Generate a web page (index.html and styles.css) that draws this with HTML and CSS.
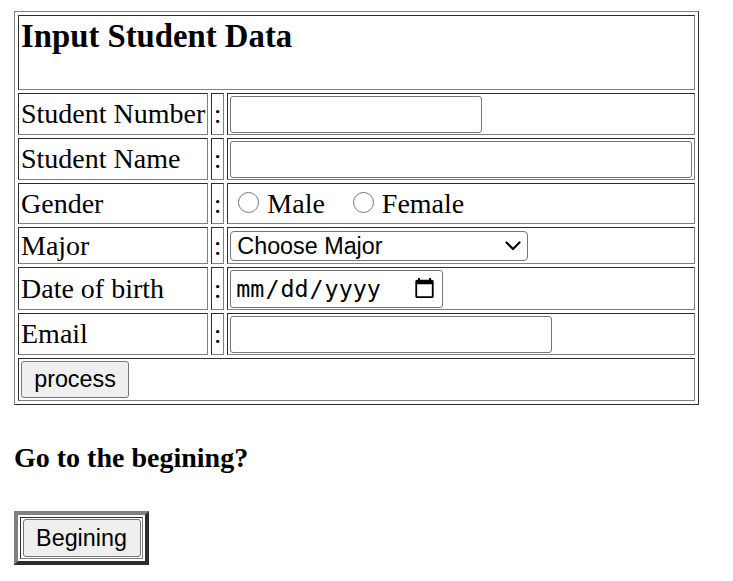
FILE: index.html
```html
<!DOCTYPE html>
<html>
<head>
<meta charset="utf-8">
<title>Input Student Data</title>
<link rel="stylesheet" href="styles.css">
</head>
<body>
<form class="student-form">
<table class="form-table">
  <tr class="row-title">
    <td colspan="3" class="title-cell"><span class="title">Input Student Data</span></td>
  </tr>
  <tr class="row-42">
    <td class="label">Student Number</td>
    <td class="colon">:</td>
    <td class="field"><input type="text" class="text-input input-number"></td>
  </tr>
  <tr class="row-42">
    <td class="label">Student Name</td>
    <td class="colon">:</td>
    <td class="field"><input type="text" class="text-input input-name"></td>
  </tr>
  <tr class="row-41">
    <td class="label">Gender</td>
    <td class="colon">:</td>
    <td class="field"><label class="option"><input type="radio" name="gender" class="radio"> Male</label> <label class="option option-second"><input type="radio" name="gender" class="radio"> Female</label></td>
  </tr>
  <tr class="row-37">
    <td class="label">Major</td>
    <td class="colon">:</td>
    <td class="field">
      <span class="select-wrap">
        <select class="select-input">
          <option>Choose Major</option>
          <option>Informatics</option>
          <option>Information Systems</option>
        </select>
        <svg class="select-arrow" width="16" height="10" viewBox="0 0 16 10" aria-hidden="true"><path d="M1.5 1.5 L8 8 L14.5 1.5" fill="none" stroke="#000" stroke-width="2.2" stroke-linecap="round" stroke-linejoin="round"/></svg>
      </span>
    </td>
  </tr>
  <tr class="row-43">
    <td class="label">Date of birth</td>
    <td class="colon">:</td>
    <td class="field"><input type="date" class="date-input"></td>
  </tr>
  <tr class="row-42">
    <td class="label">Email</td>
    <td class="colon">:</td>
    <td class="field"><input type="email" class="text-input input-email"></td>
  </tr>
  <tr class="row-43">
    <td colspan="3" class="button-cell"><button type="button" class="btn btn-process">process</button></td>
  </tr>
</table>
</form>
<h4 class="question">Go to the begining?</h4>
<table class="nav-table">
  <tr>
    <td class="nav-cell"><button type="button" class="btn btn-begin">Begining</button></td>
  </tr>
</table>
</body>
</html>
```
FILE: styles.css
```css
* {
  box-sizing: border-box;
}

body {
  margin: 11px 14px;
  background: #ffffff;
  color: #000000;
  font-family: "Liberation Serif", "Times New Roman", serif;
  font-size: 28px;
}

.student-form {
  margin: 0;
}

.form-table {
  width: 685px;
  border: 1px outset gray;
  border-spacing: 3px;
}

.form-table td {
  border: 1px inset gray;
  padding: 1px 2px;
  vertical-align: middle;
}

.row-title { height: 75px; }
.row-42 { height: 42px; }
.row-41 { height: 41px; }
.row-37 { height: 37px; }
.row-43 { height: 43px; }

.form-table .title-cell {
  vertical-align: top;
  padding-top: 2px;
}

.title {
  font-size: 32.76px;
  font-weight: bold;
}

.form-table .label {
  width: 190px;
  white-space: nowrap;
}

.form-table .colon {
  width: 13px;
  padding: 1px 1.5px;
}

.text-input,
.select-input,
.date-input {
  display: block;
  border: 1px solid #767676;
  border-radius: 3px;
  background: #ffffff;
  color: #000000;
  font-family: "Liberation Sans", Arial, sans-serif;
  font-size: 23.33px;
  padding: 1px 3px;
  margin: 0;
}

.text-input {
  height: 37px;
}

.input-number {
  width: 252px;
}

.input-name {
  width: 100%;
}

.input-email {
  width: 322px;
}

.select-wrap {
  position: relative;
  display: block;
  width: 298px;
}

.select-input {
  -webkit-appearance: none;
  appearance: none;
  width: 298px;
  height: 30px;
  padding: 0 30px 0 6px;
  border-radius: 4px;
}

.select-arrow {
  position: absolute;
  right: 7px;
  top: 10px;
  pointer-events: none;
}

.date-input {
  width: 213px;
  height: 38px;
  font-family: "DejaVu Sans Mono", "Liberation Mono", monospace;
  padding: 1px 4px;
}

.option {
  white-space: nowrap;
}

.option-second {
  margin-left: 13px;
}

.radio {
  -webkit-appearance: none;
  appearance: none;
  width: 21px;
  height: 21px;
  margin: 0 1px 0 8px;
  border: 1.5px solid #767676;
  border-radius: 50%;
  background: #ffffff;
  vertical-align: 0;
}

.radio:checked {
  background: radial-gradient(circle, #000 0 45%, #fff 48%);
}

.btn {
  display: block;
  height: 37px;
  margin: 0;
  padding: 0;
  border: 1px solid #767676;
  border-radius: 3px;
  background: #efefef;
  color: #000000;
  font-family: "Liberation Sans", Arial, sans-serif;
  font-size: 23.33px;
  text-align: center;
}

.btn-process {
  width: 108px;
}

.question {
  margin: 37px 0;
  font-size: 28px;
  font-weight: bold;
}

.nav-table {
  border: 4px outset gray;
  border-spacing: 2px;
}

.nav-table .nav-cell {
  border: 1px inset gray;
  padding: 1px 1.5px;
}

.btn-begin {
  width: 118px;
  height: 38px;
}
```
